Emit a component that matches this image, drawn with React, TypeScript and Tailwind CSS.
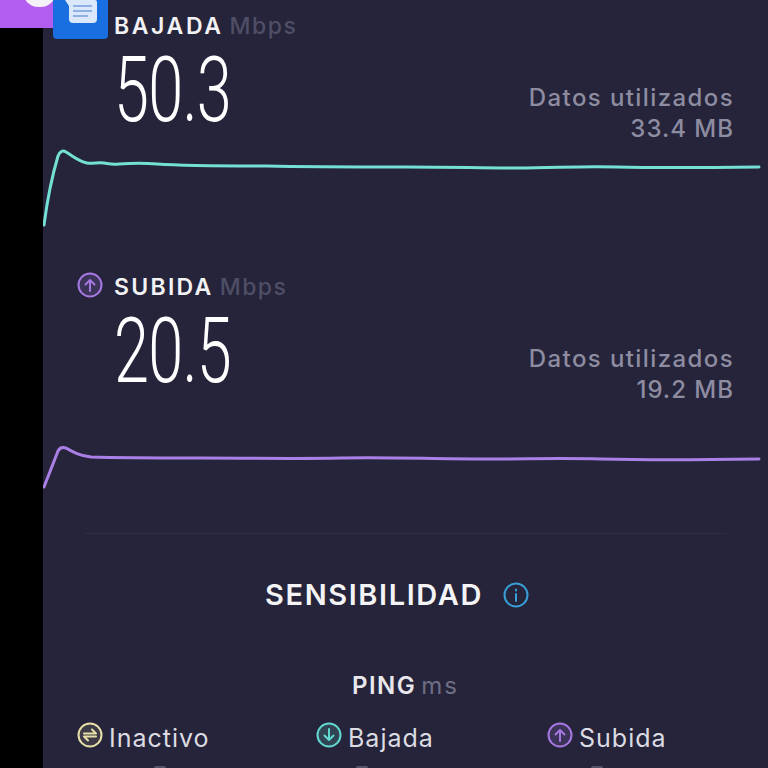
import React from 'react';

const FONT = "font-['Inter','Noto_Sans',sans-serif]";

function Arrow({ up, color }: { up: boolean; color: string }) {
  return (
    <svg viewBox="0 0 26 26" className="w-[26px] h-[26px] shrink-0 mb-[5px]" fill="none">
      <circle cx="13" cy="13" r="11.5" stroke={color} strokeWidth="2" fill={color} fillOpacity="0.18" />
      {up ? (
        <path d="M13 19V8M8.5 12.5 13 8l4.500 4.500" stroke={color} strokeWidth="2" strokeLinecap="round" strokeLinejoin="round" />
      ) : (
        <path d="M13 7v11M8.500 13.500 13 18l4.500-4.500" stroke={color} strokeWidth="2" strokeLinecap="round" strokeLinejoin="round" />
      )}
    </svg>
  );
}

function Idle() {
  return (
    <svg viewBox="0 0 26 26" className="w-[26px] h-[26px] shrink-0 mb-[5px]" fill="none">
      <circle cx="13" cy="13" r="11.500" stroke="#e8e0a8" strokeWidth="2" fill="#e8e0a8" fillOpacity="0.12" />
      <path d="M7 11.500h12l-4-4M19 14.500H7l4 4" stroke="#e8e0a8" strokeWidth="2" strokeLinecap="round" strokeLinejoin="round" />
    </svg>
  );
}

function Chart({ path, color, height }: { path: string; color: string; height: number }) {
  return (
    <svg viewBox={`0 0 725 ${height}`} width={725} height={height} className="block" fill="none">
      <path d={path} stroke={color} strokeWidth="3" strokeLinecap="round" strokeLinejoin="round" />
    </svg>
  );
}

function Metric({ value, used }: { value: string; used: string }) {
  return (
    <div className="flex justify-between items-start pl-[71px] pr-[34px]">
      <div className="text-[90px] leading-[72px] font-['Roboto',sans-serif] font-light text-white h-[72px] w-[116px] scale-x-[0.7] origin-left whitespace-nowrap tracking-[-1px]">
        {value}
      </div>
      <div className="text-right text-[24px] leading-[31px] font-medium text-[#8d8ca1] mt-[27px] tracking-[1.4px]">
        <div>Datos utilizados</div>
        <div className="tracking-[1px]">{used}</div>
      </div>
    </div>
  );
}

function Legend({ icon, label, className }: { icon: React.ReactNode; label: string; className: string }) {
  return (
    <div className={`flex items-center gap-[6px] ${className}`}>
      {icon}
      <span className="text-[25px] leading-[30px] text-[#dcdce2] tracking-[1px]">{label}</span>
    </div>
  );
}

export default function App() {
  return (
    <div className={`relative flex w-[768px] h-[768px] overflow-hidden bg-black ${FONT}`}>
      {/* status strip from the screen behind */}
      <div className="absolute left-0 top-0 w-[56px] h-[28px] bg-[#b35cf0]">
        <div className="absolute left-[23px] top-[-24px] w-[33px] h-[31px] rounded-full bg-[#f4f0f8]" />
      </div>
      <div className="absolute left-[53px] top-0 w-[55px] h-[39px] rounded-b-[4px] bg-[#1a6fe0] flex justify-center">
        <svg viewBox="0 0 32 24" className="w-[32px] h-[24px]" fill="none">
          <path d="M0 0h30a2 2 0 0 1 2 2v17a4 4 0 0 1-4 4H8a4 4 0 0 1-4-4V6z" fill="#dbe8fb" />
          <path d="M8 6h19M8 11h19M8 16h15" stroke="#8fb0e4" strokeWidth="2" />
        </svg>
      </div>

      <div className="ml-[43px] w-[725px] h-[768px] bg-[#25243a] pt-[11px] flex flex-col">
        <div className="pl-[71px] flex items-center h-[30px] text-[23px] font-semibold text-[#f2f2f4] tracking-[2.6px]">
          BAJADA<span className="ml-[6px] font-medium text-[#4f4e66] tracking-[1.5px]">Mbps</span>
        </div>
        <div className="mt-[14px]">
          <Metric value="50.3" used="33.4 MB" />
        </div>
        <div className="mt-[3px]">
          <Chart
            height={80}
            color="#74e0d6"
            path="M1 78C4 55 10 26 15 9c2-5 5-6 8-4 7 4 12 9 21 11 6 1 11-1 17 0s9 2 15 1c14-1 26-1 38 0 30 2 70 2 110 2 40 1 90 1 140 1s70 1 110 1 60-2 100-1 60 1 142 0" />
        </div>
        <div className="mt-[45px] pl-[34px] flex items-center h-[30px] text-[23px] font-semibold text-[#f2f2f4] tracking-[2.3px]">
          <Arrow up color="#a678e2" />
          <span className="ml-[11px]">SUBIDA</span>
          <span className="ml-[6px] font-medium text-[#4f4e66] tracking-[1.5px]">Mbps</span>
        </div>
        <div className="mt-[14px]">
          <Metric value="20.5" used="19.2 MB" />
        </div>
        <div className="mt-[39px]">
          <Chart
            height={46}
            color="#ab80e6"
            path="M1 43 15 7c2-4 5-4 8-3 7 4 14 8 25 9 30 1 70 1 110 1s90 1 140 0 90 1 140 1 80-1 120 0 90 1 158 0" />
        </div>
        <div className="mt-[43px] mx-[42px] h-px shrink-0 bg-[#2f2e45]" />
        <div className="mt-[41px] flex items-center justify-center h-[40px] pr-[17px]">
          <span className="text-[29px] font-semibold text-[#f4f4f6] tracking-[1.6px]">SENSIBILIDAD</span>
          <svg viewBox="0 0 26 26" className="ml-[20px] w-[26px] h-[26px]" fill="none">
            <circle cx="13" cy="13" r="11.500" stroke="#3a9fd8" strokeWidth="2" />
            <path d="M13 12v7M13 7.500v1" stroke="#3a9fd8" strokeWidth="2" strokeLinecap="round" />
          </svg>
        </div>
        <div className="mt-[53px] flex items-baseline justify-center h-[30px] text-[24px] tracking-[1.500px]">
          <span className="font-semibold text-[#e8e8ec]">PING</span>
          <span className="ml-[5px] text-[#6f6e85] tracking-[2px]">ms</span>
        </div>
        <div className="mt-[24px] flex pl-[34px]">
          <Legend icon={<Idle />} label="Inactivo" className="w-[239px]" />
          <Legend icon={<Arrow up={false} color="#62d9cf" />} label="Bajada" className="w-[231px]" />
          <Legend icon={<Arrow up color="#a678e2" />} label="Subida" className="" />
        </div>
        {/* tops of the next row, cut off by the screenshot */}
        <div className="mt-[13px] flex pl-[111px]">
          <div className="w-[12px] h-[2px] rounded-t-full bg-[#55546a]" />
          <div className="ml-[190px] w-[12px] h-[2px] rounded-t-full bg-[#55546a]" />
          <div className="ml-[223px] w-[12px] h-[2px] rounded-t-full bg-[#55546a]" />
        </div>
      </div>
    </div>
  );
}
